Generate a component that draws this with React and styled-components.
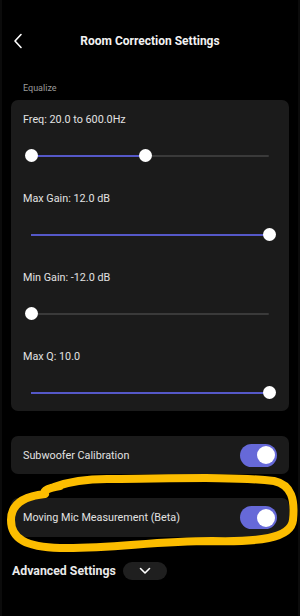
import React from "react";
import styled, { createGlobalStyle } from "styled-components";

const GlobalStyle = createGlobalStyle`
  html, body {
    margin: 0;
    padding: 0;
    background: #000;
  }
  body {
    font-family: Roboto, "Noto Sans", "Liberation Sans", sans-serif;
    color: #e4e4e4;
  }
`;

const Page = styled.div`
  position: relative;
  width: 300px;
  height: 616px;
  background: #000;
  overflow: hidden;
  border-left: 2px solid #0b0b0b;
  border-right: 2px solid #0b0b0b;
  box-sizing: border-box;
`;

const Header = styled.header`
  display: grid;
  grid-template-columns: 30px 1fr 30px;
  align-items: center;
  height: 30px;
  margin-top: 26px;
  padding: 0 10px;
`;

const BackButton = styled.button`
  display: flex;
  align-items: center;
  background: none;
  border: none;
  padding: 0;
  color: #fff;
  cursor: pointer;
`;

const Title = styled.h1`
  margin: 0;
  text-align: center;
  font-size: 12px;
  font-weight: 700;
  color: #f2f2f2;
`;

const SectionLabel = styled.div`
  margin: 26px 0 6px 21px;
  font-size: 9px;
  line-height: 12px;
  color: #9b9b9b;
`;

const Card = styled.section`
  margin: 0 9px;
  padding: 13px 12px 6px;
  background: #1b1b1b;
  border-radius: 7px;
`;

const SliderLabel = styled.div`
  font-size: 10.8px;
  line-height: 14px;
  color: #e2e2e2;
`;

const SliderRow = styled.div`
  position: relative;
  height: 24px;
  margin: 17px 8px 24px;
  &:last-child {
    margin-bottom: 0;
  }
`;

const Track = styled.div`
  position: absolute;
  left: 0;
  right: 0;
  top: 11px;
  height: 2px;
  background: #3a3a3a;
  border-radius: 1px;
`;

const Fill = styled.div`
  position: absolute;
  top: 11px;
  height: 2px;
  background: #5558c8;
`;

const Thumb = styled.div`
  position: absolute;
  top: 5px;
  width: 13px;
  height: 13px;
  margin-left: -6.5px;
  border-radius: 50%;
  background: #fff;
`;

const ToggleCard = styled.div`
  display: flex;
  align-items: center;
  justify-content: space-between;
  height: ${(p) => p.h}px;
  margin: ${(p) => p.top}px 9px 0;
  padding: 0 12px;
  background: #1b1b1b;
  border-radius: 7px;
  font-size: 10.8px;
  color: #e2e2e2;
`;

const Switch = styled.div`
  position: relative;
  width: 37px;
  height: 23px;
  border-radius: 12px;
  background: #6669d8;
`;

const SwitchKnob = styled.div`
  position: absolute;
  right: 2px;
  top: 2.5px;
  width: 18px;
  height: 18px;
  border-radius: 50%;
  background: #fff;
`;

const AdvancedRow = styled.div`
  display: flex;
  align-items: center;
  gap: 7px;
  margin: 25px 0 0 10px;
`;

const AdvancedTitle = styled.span`
  font-size: 12.3px;
  font-weight: 700;
  color: #eaeaea;
`;

const ExpandPill = styled.button`
  display: flex;
  align-items: center;
  justify-content: center;
  width: 44px;
  height: 18px;
  border: none;
  border-radius: 9px;
  background: #1f1f1f;
  padding: 0;
`;

const Annotation = styled.svg`
  position: absolute;
  left: 0;
  top: 0;
  pointer-events: none;
`;

const sliders = [
  { label: "Freq: 20.0 to 600.0Hz", from: 0, to: 0.48, thumbs: [0, 0.48] },
  { label: "Max Gain: 12.0 dB", from: 0, to: 1, thumbs: [1] },
  { label: "Min Gain: -12.0 dB", from: 0, to: 0, thumbs: [0] },
  { label: "Max Q: 10.0", from: 0, to: 1, thumbs: [1] },
];

const Slider = ({ from, to, thumbs }) => (
  <SliderRow>
    <Track />
    <Fill style={{ left: `${from * 100}%`, width: `${(to - from) * 100}%` }} />
    {thumbs.map((t, i) => (
      <Thumb key={i} style={{ left: `${t * 100}%` }} />
    ))}
  </SliderRow>
);

const Toggle = () => (
  <Switch>
    <SwitchKnob />
  </Switch>
);

export default function App() {
  return (
    <>
      <GlobalStyle />
      <Page>
        <Header>
          <BackButton>
            <svg width="12" height="16" viewBox="0 0 12 16">
              <path d="M9 1.5 L3 8 L9 14.5" fill="none" stroke="#fff" strokeWidth="1.6" strokeLinecap="round" strokeLinejoin="round" />
            </svg>
          </BackButton>
          <Title>Room Correction Settings</Title>
          <span />
        </Header>

        <SectionLabel>Equalize</SectionLabel>
        <Card>
          {sliders.map((s) => (
            <React.Fragment key={s.label}>
              <SliderLabel>{s.label}</SliderLabel>
              <Slider {...s} />
            </React.Fragment>
          ))}
        </Card>

        <ToggleCard top={25} h={38}>
          <span>Subwoofer Calibration</span>
          <Toggle />
        </ToggleCard>
        <ToggleCard top={24} h={39}>
          <span>Moving Mic Measurement (Beta)</span>
          <Toggle />
        </ToggleCard>

        <AdvancedRow>
          <AdvancedTitle>Advanced Settings</AdvancedTitle>
          <ExpandPill>
            <svg width="12" height="8" viewBox="0 0 12 8">
              <path d="M1.5 1.5 L6 6 L10.5 1.5" fill="none" stroke="#fff" strokeWidth="1.6" strokeLinecap="round" strokeLinejoin="round" />
            </svg>
          </ExpandPill>
        </AdvancedRow>

        <Annotation width="300" height="616" viewBox="0 0 300 616">
          <path
            d="M58 486 C48 488 40 490 43 494 C24 496 9 503 9 520 C9 539 24 547 58 548 C110 549 150 541 210 541 C255 542 289 539 291 520 C293 500 290 485 272 481 C230 476 160 479 105 479 C80 479 66 482 52 487"
            fill="none"
            stroke="#fcbd00"
            strokeWidth="8"
            strokeLinecap="round"
            strokeLinejoin="round"
          />
        </Annotation>
      </Page>
    </>
  );
}
